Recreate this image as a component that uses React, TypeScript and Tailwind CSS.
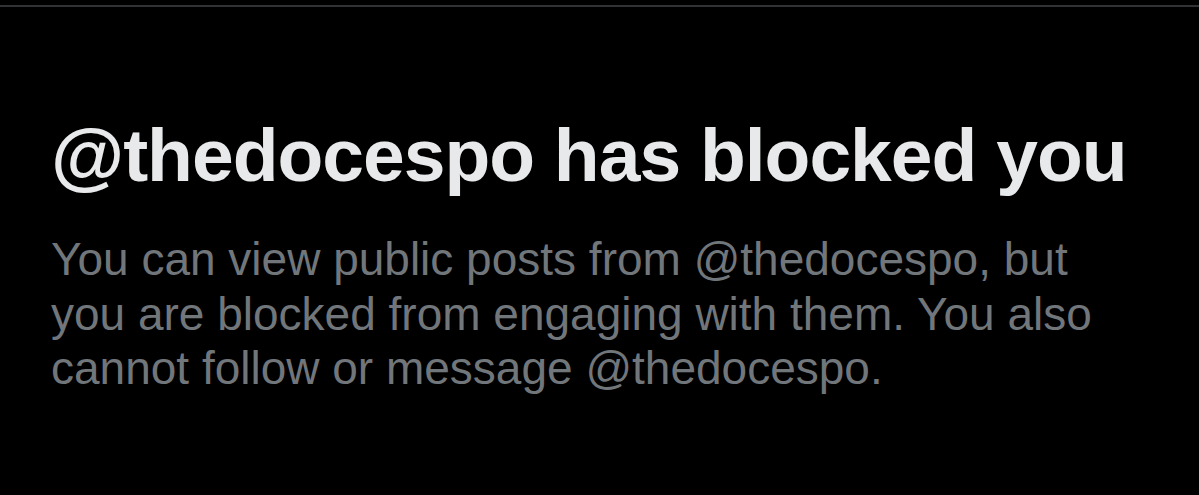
import React from 'react'

const handle = '@thedocespo'

const App: React.FC = () => {
  return (
    <div className="w-full h-[495px] bg-black overflow-hidden" style={{ fontFamily: '"Liberation Sans", Arial, sans-serif' }}>
      {/* Top divider */}
      <div className="pt-[5px]">
        <div className="h-[2px] w-full bg-[#2f3336]" />
      </div>

      <div className="pl-[51px] pt-[111px]">
        <h1 className="text-[75px] leading-none font-bold tracking-[-1px] text-[#e7e9ea] whitespace-nowrap">
          {handle} has blocked you
        </h1>
        <p className="mt-[39px] text-[46px] leading-[54.5px] text-[#71767b] whitespace-nowrap">
          You can view public posts from {handle}, but
          <br />
          you are blocked from engaging with them. You also
          <br />
          cannot follow or message {handle}.
        </p>
      </div>
    </div>
  )
}

export default App
